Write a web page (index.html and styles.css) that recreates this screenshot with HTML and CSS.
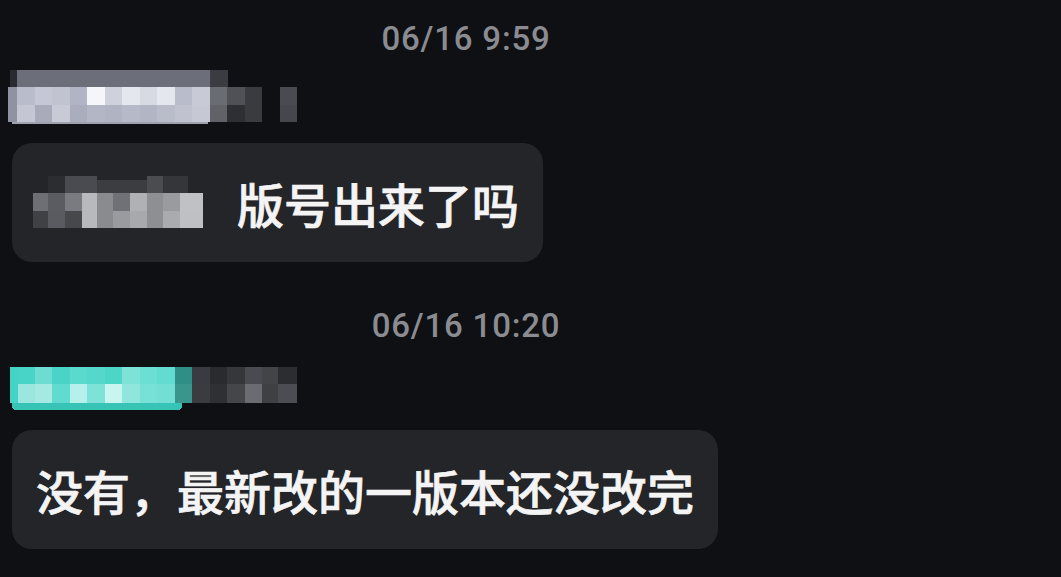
FILE: index.html
```html
<!DOCTYPE html>
<html lang="zh-CN">
<head>
    <meta charset="UTF-8">
    <meta name="viewport" content="width=device-width, initial-scale=1.0">
    <title>聊天记录</title>
    <link rel="stylesheet" href="styles.css">
</head>
<body>
    <div class="chat">
        <div class="time">06/16 9:59</div>

        <!-- sender name, mosaic -->
        <svg class="sender sender-one" width="290" height="54" viewBox="0 0 290 54" shape-rendering="crispEdges">
            <rect x="2" y="0" width="7" height="17" fill="#2a2b30"/>
            <rect x="9" y="0" width="193" height="17" fill="#6c6e79"/>
            <rect x="202" y="0" width="18" height="17" fill="#3b3c41"/>
            <rect x="0" y="17" width="9" height="35" fill="#8f92a0"/>
            <rect x="9" y="17" width="17.5" height="18" fill="#b8bccb"/>
            <rect x="26.5" y="17" width="17.5" height="18" fill="#c5c8d4"/>
            <rect x="44" y="17" width="17.5" height="18" fill="#c0c3d0"/>
            <rect x="61.5" y="17" width="17.5" height="18" fill="#b0b4c4"/>
            <rect x="79" y="17" width="17.5" height="18" fill="#f5f6fa"/>
            <rect x="96.5" y="17" width="17.5" height="18" fill="#cfd2dd"/>
            <rect x="114" y="17" width="17.5" height="18" fill="#e5e7ee"/>
            <rect x="131.5" y="17" width="17.5" height="18" fill="#d8dae3"/>
            <rect x="149" y="17" width="17.5" height="18" fill="#e5e7ee"/>
            <rect x="166.5" y="17" width="17.5" height="18" fill="#b9bdcb"/>
            <rect x="184" y="17" width="17.5" height="18" fill="#c8cbd6"/>
            <rect x="201.5" y="17" width="17.5" height="18" fill="#6a6c74"/>
            <rect x="219" y="17" width="17.5" height="18" fill="#505157"/>
            <rect x="236.5" y="17" width="17.5" height="18" fill="#3a3b3f"/>
            <rect x="271.5" y="17" width="17.5" height="18" fill="#4a4b50"/>
            <rect x="9" y="35" width="17.5" height="17" fill="#c4c7d3"/>
            <rect x="26.5" y="35" width="17.5" height="17" fill="#a8acba"/>
            <rect x="44" y="35" width="17.5" height="17" fill="#c8cbd6"/>
            <rect x="61.5" y="35" width="17.5" height="17" fill="#a9adbc"/>
            <rect x="79" y="35" width="17.5" height="17" fill="#b3b7c5"/>
            <rect x="96.5" y="35" width="17.5" height="17" fill="#b0b4c2"/>
            <rect x="114" y="35" width="17.5" height="17" fill="#b6bac8"/>
            <rect x="131.5" y="35" width="17.5" height="17" fill="#b2b6c4"/>
            <rect x="149" y="35" width="17.5" height="17" fill="#b9bdca"/>
            <rect x="166.5" y="35" width="17.5" height="17" fill="#c0c3cf"/>
            <rect x="184" y="35" width="17.5" height="17" fill="#c6c9d4"/>
            <rect x="201.5" y="35" width="17.5" height="17" fill="#606268"/>
            <rect x="219" y="35" width="17.5" height="17" fill="#2e2f33"/>
            <rect x="236.5" y="35" width="17.5" height="17" fill="#3a3b3f"/>
            <rect x="271.5" y="35" width="17.5" height="17" fill="#46474c"/>
            <rect x="4" y="52" width="196" height="2" fill="#9ea1ae"/>
        </svg>

        <div class="bubble">
            <svg class="mask" width="172" height="53" viewBox="0 0 172 53" shape-rendering="crispEdges">
                <rect x="15" y="0" width="17" height="17" fill="#2c2d31"/>
                <rect x="32" y="0" width="32" height="17" fill="#4a4b50"/>
                <rect x="64" y="4" width="50" height="13" fill="#3c3d41"/>
                <rect x="114" y="0" width="16" height="17" fill="#4b4c50"/>
                <rect x="130" y="0" width="25" height="17" fill="#35363a"/>
                <rect x="0" y="17" width="15" height="18" fill="#6e6f74"/>
                <rect x="15" y="17" width="17" height="18" fill="#5b5c61"/>
                <rect x="32" y="17" width="17" height="18" fill="#7a7b80"/>
                <rect x="49" y="17" width="15" height="18" fill="#b8b9bd"/>
                <rect x="64" y="17" width="16" height="18" fill="#8a8b8f"/>
                <rect x="80" y="17" width="17" height="18" fill="#707176"/>
                <rect x="97" y="17" width="17" height="18" fill="#b0b1b5"/>
                <rect x="114" y="17" width="16" height="18" fill="#8e8f93"/>
                <rect x="130" y="17" width="17" height="18" fill="#9a9b9f"/>
                <rect x="147" y="17" width="23" height="18" fill="#c0c1c5"/>
                <rect x="0" y="35" width="15" height="17" fill="#404145"/>
                <rect x="15" y="35" width="17" height="17" fill="#5a5b60"/>
                <rect x="32" y="35" width="17" height="17" fill="#47484c"/>
                <rect x="49" y="35" width="15" height="17" fill="#b8b9bd"/>
                <rect x="64" y="35" width="16" height="17" fill="#8a8b8f"/>
                <rect x="80" y="35" width="17" height="17" fill="#9a9b9f"/>
                <rect x="97" y="35" width="17" height="17" fill="#a8a9ad"/>
                <rect x="114" y="35" width="16" height="17" fill="#8e8f93"/>
                <rect x="130" y="35" width="17" height="17" fill="#aaabaf"/>
                <rect x="147" y="35" width="23" height="17" fill="#bfc0c4"/>
            </svg>
            <span class="text">版号出来了吗</span>
        </div>

        <div class="time time-later">06/16 10:20</div>

        <svg class="sender sender-two" width="288" height="45" viewBox="0 0 288 45" shape-rendering="crispEdges">
            <rect x="2" y="36" width="170" height="9" rx="4" fill="#37c3b6"/>
            <rect x="0" y="2" width="8" height="36" fill="#45d3c6"/>
            <rect x="8" y="2" width="17" height="17" fill="#48d4c7"/>
            <rect x="25" y="2" width="17" height="17" fill="#6edcd2"/>
            <rect x="42" y="2" width="18" height="17" fill="#48d5c8"/>
            <rect x="60" y="2" width="17" height="17" fill="#5ad9cd"/>
            <rect x="77" y="2" width="18" height="17" fill="#55d8cb"/>
            <rect x="95" y="2" width="17" height="17" fill="#4dd5c8"/>
            <rect x="112" y="2" width="18" height="17" fill="#7de2d8"/>
            <rect x="130" y="2" width="17" height="17" fill="#6cdfd5"/>
            <rect x="147" y="2" width="18" height="17" fill="#62dcd1"/>
            <rect x="165" y="2" width="17" height="17" fill="#2f8e86"/>
            <rect x="182" y="2" width="18" height="17" fill="#3a3b40"/>
            <rect x="200" y="2" width="17" height="17" fill="#2a2b2f"/>
            <rect x="217" y="2" width="18" height="17" fill="#36373b"/>
            <rect x="235" y="2" width="17" height="17" fill="#4a4b50"/>
            <rect x="252" y="2" width="16" height="17" fill="#434448"/>
            <rect x="268" y="2" width="19" height="17" fill="#2c2d31"/>
            <rect x="8" y="19" width="17" height="19" fill="#9be6de"/>
            <rect x="25" y="19" width="17" height="19" fill="#a6e9e2"/>
            <rect x="42" y="19" width="18" height="19" fill="#5fdbcf"/>
            <rect x="60" y="19" width="17" height="19" fill="#b5f0ea"/>
            <rect x="77" y="19" width="18" height="19" fill="#7fe2d8"/>
            <rect x="95" y="19" width="17" height="19" fill="#c8f5f0"/>
            <rect x="112" y="19" width="18" height="19" fill="#8fe6dd"/>
            <rect x="130" y="19" width="17" height="19" fill="#78e1d7"/>
            <rect x="147" y="19" width="18" height="19" fill="#72ded4"/>
            <rect x="165" y="19" width="17" height="19" fill="#3a958d"/>
            <rect x="182" y="19" width="18" height="19" fill="#3b3c40"/>
            <rect x="200" y="19" width="17" height="19" fill="#2f3034"/>
            <rect x="217" y="19" width="18" height="19" fill="#45464a"/>
            <rect x="235" y="19" width="17" height="19" fill="#6b6c71"/>
            <rect x="252" y="19" width="16" height="19" fill="#3f4044"/>
            <rect x="268" y="19" width="19" height="19" fill="#4c4d52"/>
        </svg>

        <div class="bubble bubble-later">
            <span class="text">没有，最新改的一版本还没改完</span>
        </div>
    </div>
</body>
</html>
```

FILE: styles.css
```css
* {
    margin: 0;
    padding: 0;
    box-sizing: border-box;
}

body {
    background: #0f1013;
    font-family: Roboto, "Noto Sans CJK SC", sans-serif;
    color: #fff;
    height: 100vh;
    overflow: hidden;
}

.chat {
    width: 932px;
    padding: 19px 12px 0;
}

.time {
    text-align: center;
    font-size: 33px;
    line-height: 40px;
    font-weight: 500;
    letter-spacing: 0.8px;
    color: #8b8c91;
}

.time-later {
    margin-top: 44px;
}

.sender {
    display: block;
}

.sender-one {
    margin: 11px 0 0 -4px;
}

.sender-two {
    margin: 19px 0 0 -2px;
}

.bubble {
    display: flex;
    align-items: center;
    width: fit-content;
    margin-top: 19px;
    padding: 24px;
    background: #242528;
    border-radius: 20px;
}

.bubble-later {
    margin-top: 20px;
}

.mask {
    display: block;
    margin: 0 32px 0 -3px;
}

.text {
    font-family: "Noto Sans CJK SC", sans-serif;
    font-size: 47px;
    line-height: 71px;
    font-weight: 500;
    -webkit-text-stroke: 0.7px currentColor;
    color: #f4f4f5;
}
```
